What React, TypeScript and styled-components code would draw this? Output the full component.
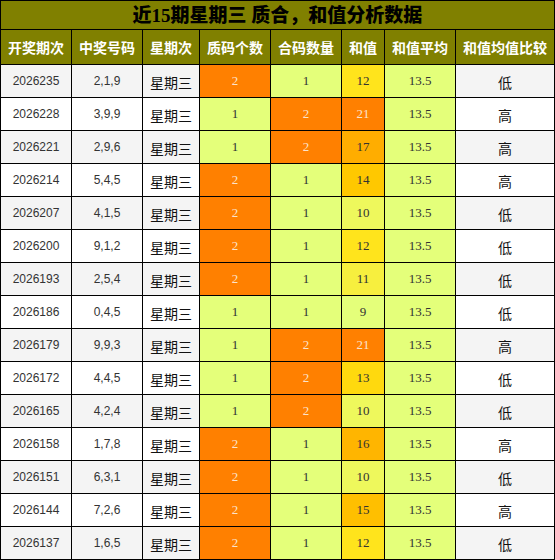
import React from 'react';
import styled, { createGlobalStyle } from 'styled-components';

const GlobalStyle = createGlobalStyle`
  html, body {
    margin: 0;
    padding: 0;
    background: #ffffff;
  }
`;

const color = {
  olive: '#808000',
  line: '#000000',
  orange: '#ff8000',
  lime: '#e4ff7a',
  rowGray: '#f4f4f4',
  white: '#ffffff',
  text: '#333333',
};

const sumColors: Record<number, string> = {
  9: '#e4ff7a',
  10: '#eef85c',
  11: '#f7ef3e',
  12: '#ffe41c',
  13: '#ffd90e',
  14: '#ffc800',
  15: '#ffbf00',
  16: '#ffb500',
  17: '#ffad00',
  21: '#ff8000',
};

type Tone = 'plain' | 'orange' | 'lime' | 'custom';
type Font = 'sans' | 'serif' | 'cjk';

const StyledSheet = styled.div`
  display: grid;
  grid-template-columns: 70px 70px 56px 70px 70px 42px 70px 98px;
  grid-template-rows: 28px 34px;
  grid-auto-rows: 32px;
  gap: 1px;
  padding: 1px;
  width: 555px;
  box-sizing: border-box;
  background-color: ${color.line};
`;

const StyledTitle = styled.div`
  grid-column: 1 / -1;
  display: flex;
  align-items: center;
  justify-content: center;
  background-color: ${color.olive};
  color: #000000;
  font-family: 'Liberation Serif', 'Noto Sans CJK SC', serif;
  font-size: 19px;
  font-weight: 900;
  line-height: 1;
`;

const StyledHeadCell = styled.div`
  display: flex;
  align-items: center;
  justify-content: center;
  background-color: ${color.olive};
  color: ${color.white};
  font-family: 'Noto Sans CJK SC', sans-serif;
  font-size: 14px;
  font-weight: bold;
  white-space: nowrap;
`;

const fontStack: Record<Font, string> = {
  sans: "'Liberation Sans', Arial, sans-serif",
  serif: "'Liberation Serif', 'Times New Roman', serif",
  cjk: "'Noto Sans CJK SC', sans-serif",
};

const StyledCell = styled.div<{ $tone: Tone; $stripe: boolean; $font: Font; $fill?: string }>`
  display: flex;
  align-items: center;
  justify-content: center;
  background-color: ${({ $tone, $stripe, $fill }) =>
    $tone === 'orange'
      ? color.orange
      : $tone === 'lime'
      ? color.lime
      : $tone === 'custom'
      ? $fill
      : $stripe
      ? color.rowGray
      : color.white};
  color: ${({ $tone, $font, $fill }) =>
    $tone === 'orange' || ($tone === 'custom' && $fill === color.orange)
      ? '#fbe3cc'
      : $font === 'cjk'
      ? '#111111'
      : color.text};
  font-family: ${({ $font }) => fontStack[$font]};
  font-size: ${({ $font }) => ($font === 'sans' ? '12px' : $font === 'serif' ? '13px' : '14px')};
  padding-top: ${({ $font }) => ($font === 'cjk' ? '2px' : '0')};
  box-sizing: border-box;
`;

type Draw = {
  issue: string;
  numbers: string;
  primes: number;
  composites: number;
  sum: number;
  compare: string;
};

const draws: Draw[] = [
  { issue: '2026235', numbers: '2,1,9', primes: 2, composites: 1, sum: 12, compare: '低' },
  { issue: '2026228', numbers: '3,9,9', primes: 1, composites: 2, sum: 21, compare: '高' },
  { issue: '2026221', numbers: '2,9,6', primes: 1, composites: 2, sum: 17, compare: '高' },
  { issue: '2026214', numbers: '5,4,5', primes: 2, composites: 1, sum: 14, compare: '高' },
  { issue: '2026207', numbers: '4,1,5', primes: 2, composites: 1, sum: 10, compare: '低' },
  { issue: '2026200', numbers: '9,1,2', primes: 2, composites: 1, sum: 12, compare: '低' },
  { issue: '2026193', numbers: '2,5,4', primes: 2, composites: 1, sum: 11, compare: '低' },
  { issue: '2026186', numbers: '0,4,5', primes: 1, composites: 1, sum: 9, compare: '低' },
  { issue: '2026179', numbers: '9,9,3', primes: 1, composites: 2, sum: 21, compare: '高' },
  { issue: '2026172', numbers: '4,4,5', primes: 1, composites: 2, sum: 13, compare: '低' },
  { issue: '2026165', numbers: '4,2,4', primes: 1, composites: 2, sum: 10, compare: '低' },
  { issue: '2026158', numbers: '1,7,8', primes: 2, composites: 1, sum: 16, compare: '高' },
  { issue: '2026151', numbers: '6,3,1', primes: 2, composites: 1, sum: 10, compare: '低' },
  { issue: '2026144', numbers: '7,2,6', primes: 2, composites: 1, sum: 15, compare: '高' },
  { issue: '2026137', numbers: '1,6,5', primes: 2, composites: 1, sum: 12, compare: '低' },
];

const headers = ['开奖期次', '中奖号码', '星期次', '质码个数', '合码数量', '和值', '和值平均', '和值均值比较'];

const countTone = (n: number): Tone => (n >= 2 ? 'orange' : 'lime');

const App = () => {
  return (
    <>
      <GlobalStyle />
      <StyledSheet>
        <StyledTitle>近15期星期三 质合，和值分析数据</StyledTitle>
        {headers.map((h) => (
          <StyledHeadCell key={h}>{h}</StyledHeadCell>
        ))}
        {draws.map((d, i) => {
          const stripe = i % 2 === 0;
          return (
            <React.Fragment key={d.issue}>
              <StyledCell $tone='plain' $stripe={stripe} $font='sans'>
                {d.issue}
              </StyledCell>
              <StyledCell $tone='plain' $stripe={stripe} $font='sans'>
                {d.numbers}
              </StyledCell>
              <StyledCell $tone='plain' $stripe={stripe} $font='cjk'>
                星期三
              </StyledCell>
              <StyledCell $tone={countTone(d.primes)} $stripe={stripe} $font='serif'>
                {d.primes}
              </StyledCell>
              <StyledCell $tone={countTone(d.composites)} $stripe={stripe} $font='serif'>
                {d.composites}
              </StyledCell>
              <StyledCell $tone='custom' $fill={sumColors[d.sum]} $stripe={stripe} $font='serif'>
                {d.sum}
              </StyledCell>
              <StyledCell $tone='lime' $stripe={stripe} $font='serif'>
                13.5
              </StyledCell>
              <StyledCell $tone='plain' $stripe={stripe} $font='cjk'>
                {d.compare}
              </StyledCell>
            </React.Fragment>
          );
        })}
      </StyledSheet>
    </>
  );
};

export default App;
